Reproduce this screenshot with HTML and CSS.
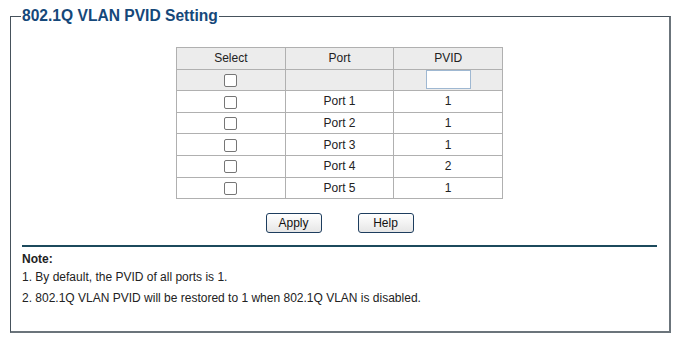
FILE: index.html
```html
<!DOCTYPE html>
<html lang="en">
<head>
    <meta charset="UTF-8">
    <meta name="viewport" content="width=device-width, initial-scale=1.0">
    <title>802.1Q VLAN PVID Setting</title>
    <link rel="stylesheet" href="styles.css">
</head>
<body>
    <fieldset class="panel">
        <legend>802.1Q VLAN PVID Setting</legend>

        <table class="pvid-table">
            <thead>
                <tr>
                    <th>Select</th>
                    <th>Port</th>
                    <th>PVID</th>
                </tr>
            </thead>
            <tbody>
                <tr class="filter-row">
                    <td><span class="checkbox"></span></td>
                    <td></td>
                    <td><span class="pvid-input"></span></td>
                </tr>
                <tr>
                    <td><span class="checkbox"></span></td>
                    <td>Port 1</td>
                    <td>1</td>
                </tr>
                <tr>
                    <td><span class="checkbox"></span></td>
                    <td>Port 2</td>
                    <td>1</td>
                </tr>
                <tr>
                    <td><span class="checkbox"></span></td>
                    <td>Port 3</td>
                    <td>1</td>
                </tr>
                <tr>
                    <td><span class="checkbox"></span></td>
                    <td>Port 4</td>
                    <td>2</td>
                </tr>
                <tr>
                    <td><span class="checkbox"></span></td>
                    <td>Port 5</td>
                    <td>1</td>
                </tr>
            </tbody>
        </table>

        <div class="actions">
            <button class="btn">Apply</button>
            <button class="btn">Help</button>
        </div>

        <div class="note">
            <p class="note-title">Note:</p>
            <p>1. By default, the PVID of all ports is 1.</p>
            <p>2. 802.1Q VLAN PVID will be restored to 1 when 802.1Q VLAN is disabled.</p>
        </div>
    </fieldset>
</body>
</html>
```

FILE: styles.css
```css
* {
    box-sizing: border-box;
    margin: 0;
    padding: 0;
}

body {
    font-family: 'Liberation Sans', Arial, sans-serif;
    font-size: 12px;
    color: #222;
    background: #fff;
    padding: 7px 0 0 10px;
}

.panel {
    width: 661px;
    height: 326px;
    border: 1px solid #46525c;
    border-right: 2px solid #6b747b;
    border-bottom: 2px solid #6b747b;
    padding: 0 12px 0 11px;
}

.panel legend {
    margin-left: -1px;
    padding: 0 1px;
    font-size: 15.6px;
    line-height: 18px;
    font-weight: bold;
    color: #15487a;
}

.pvid-table {
    margin: 22px auto 0;
    width: 327px;
    border-collapse: collapse;
    table-layout: fixed;
}

.pvid-table th,
.pvid-table td {
    border: 1px solid #b0b0b0;
    height: 21.6px;
    padding: 0;
    text-align: center;
    vertical-align: middle;
    font-weight: normal;
    line-height: 14px;
}

.pvid-table thead tr,
.filter-row {
    background: #ececec;
}

.checkbox {
    display: inline-block;
    width: 13px;
    height: 13px;
    border: 1px solid #767676;
    border-radius: 2px;
    background: #fff;
    vertical-align: middle;
}

.pvid-input {
    display: inline-block;
    width: 45px;
    height: 19px;
    border: 1px solid #9fb8d2;
    background: #fff;
    vertical-align: middle;
}

.actions {
    display: flex;
    justify-content: center;
    gap: 36px;
    margin-top: 14px;
}

.btn {
    width: 56px;
    height: 20px;
    font-family: 'Liberation Sans', Arial, sans-serif;
    font-size: 12px;
    color: #111;
    border: 1px solid #1d3d5e;
    border-radius: 3px;
    background: linear-gradient(#ffffff, #e6e6e6);
    cursor: pointer;
}

.note {
    margin-top: 12px;
    border-top: 2px solid #1c4a5c;
    padding-top: 5px;
}

.note p {
    line-height: 21px;
}

.note-title {
    font-weight: bold;
    font-size: 12px;
    line-height: 15px !important;
}
```
